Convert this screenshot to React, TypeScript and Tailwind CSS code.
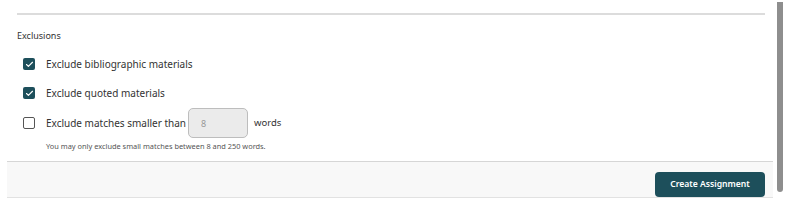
import React, { useState } from "react";
import { Check } from "lucide-react";

function Box({ checked, onClick }: { checked: boolean; onClick: () => void }) {
  return (
    <button
      onClick={onClick}
      className={`w-[12px] h-[12px] rounded-[2px] flex items-center justify-center shrink-0 ${
        checked ? "bg-[#1d4f5b]" : "border-[1.5px] border-[#555] bg-white"
      }`}
    >
      {checked && <Check size={9} strokeWidth={3} className="text-white" />}
    </button>
  );
}

export default function App() {
  const [biblio, setBiblio] = useState(true);
  const [quoted, setQuoted] = useState(true);
  const [small, setSmall] = useState(false);

  return (
    <div
      className="w-[786px] h-[207px] bg-white flex text-[#333]"
      style={{ fontFamily: "'Noto Sans', 'Open Sans', sans-serif" }}
    >
      <div className="w-[7px]" />
      <div className="w-[766px] flex flex-col">
        {/* Exclusions section */}
        <div className="pl-[10px] pr-[8px]">
          <div className="mt-[13px] h-[2px] bg-[#dcdcdc]" />
          <div className="mt-[15px] text-[9px] leading-[12px]">Exclusions</div>

          <div className="mt-[15px] pl-[6px] flex flex-col">
            <div className="flex items-center gap-[11px] h-[14px]">
              <Box checked={biblio} onClick={() => setBiblio(!biblio)} />
              <span className="text-[10px]">Exclude bibliographic materials</span>
            </div>
            <div className="flex items-center gap-[11px] h-[14px] mt-[15px]">
              <Box checked={quoted} onClick={() => setQuoted(!quoted)} />
              <span className="text-[10px]">Exclude quoted materials</span>
            </div>
            <div className="flex items-center gap-[11px] h-[30px] mt-[8px]">
              <Box checked={small} onClick={() => setSmall(!small)} />
              <span className="text-[10px]">Exclude matches smaller than</span>
              <input
                disabled
                placeholder="8"
                className="w-[60px] h-[30px] rounded-[5px] border border-[#bdbdbd] bg-[#ebebeb] px-[12px] text-[9px] placeholder-[#999] -ml-[9px]"
              />
              <span className="text-[9.5px] -ml-[5px]">words</span>
            </div>
            <div className="pl-[23px] mt-[3px] text-[7.4px] leading-[10px] text-[#555]">
              You may only exclude small matches between 8 and 250 words.
            </div>
          </div>
        </div>

        {/* Footer */}
        <div className="mt-[10px] h-[1px] bg-[#d6d6d6]" />
        <div className="h-[36px] bg-[#f8f8f8] border-b border-[#e2e2e2] flex items-start justify-end pr-[8px]">
          <button className="mt-[10px] w-[110px] h-[25px] rounded-[4px] bg-[#1d4f5b] text-white text-[8.6px] font-semibold">
            Create Assignment
          </button>
        </div>
      </div>
      <div className="flex-1 flex justify-center pt-[2px]">
        <div className="w-[6px] h-[190px] rounded-b-[3px] bg-[#8e8e8e]" />
      </div>
    </div>
  );
}
